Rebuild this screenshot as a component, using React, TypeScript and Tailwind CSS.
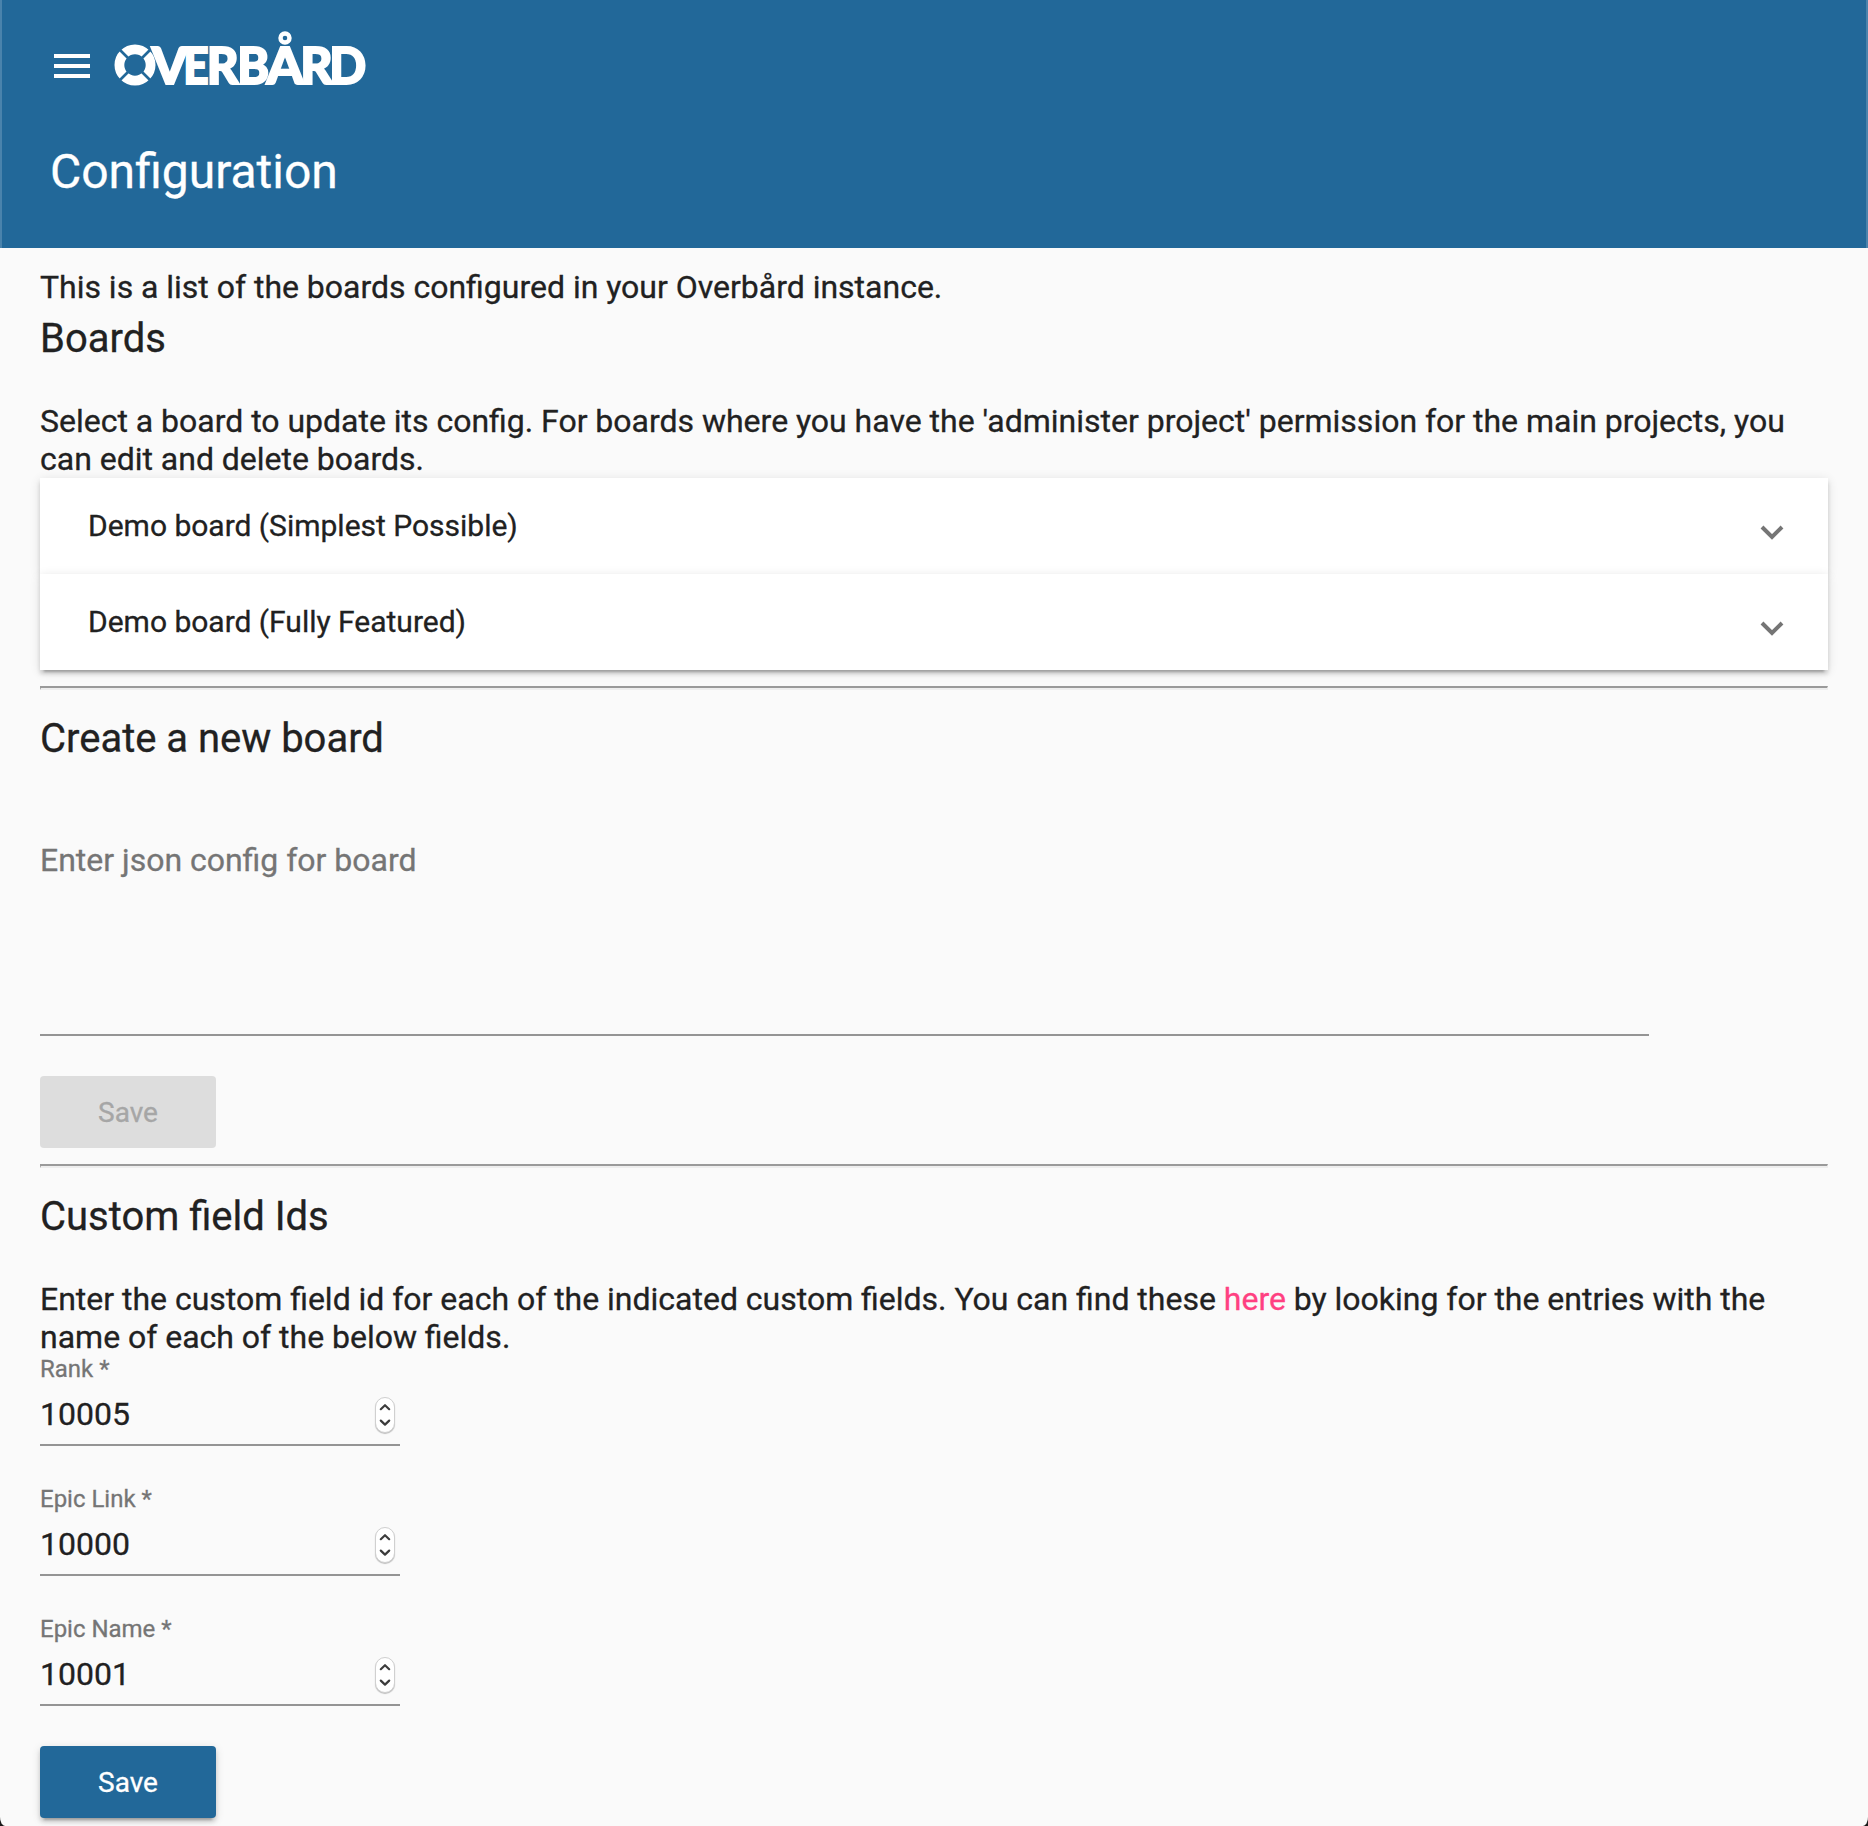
import React from "react";

function Logo() {
  return (
    <svg width="270" height="80" viewBox="112 20 270 80" fill="#fff" aria-label="Overbård" className="block">
      <circle cx="135" cy="65" r="15.6" fill="none" stroke="#fff" strokeWidth="9.8" />
      <g stroke="#226899" strokeWidth="2.7">
        <path d="M119 49l10 10M151 49l-10 10M119 81l10-10M151 81l-10-10" />
      </g>
      <text y="83.8" stroke="#fff" strokeWidth="2" className="font-[Lato] text-[52px] font-black">
        <tspan x="151.8" textLength="36" lengthAdjust="spacingAndGlyphs">V</tspan>
        <tspan x="183.3" textLength="25.4" lengthAdjust="spacingAndGlyphs">E</tspan>
        <tspan x="206.8" textLength="32" lengthAdjust="spacingAndGlyphs">R</tspan>
        <tspan x="237.2" textLength="32" lengthAdjust="spacingAndGlyphs">B</tspan>
        <tspan x="266.4" textLength="37" lengthAdjust="spacingAndGlyphs">A</tspan>
        <tspan x="300.2" textLength="32.5" lengthAdjust="spacingAndGlyphs">R</tspan>
        <tspan x="329.2" textLength="37" lengthAdjust="spacingAndGlyphs">D</tspan>
      </text>
      <circle cx="285" cy="38" r="4.5" fill="none" stroke="#fff" strokeWidth="4.4" />
    </svg>
  );
}

function Panel({ title }: { title: string }) {
  return (
    <div className="flex h-24 items-center justify-between bg-white pl-12 pr-[44px] shadow-[0_6px_2px_-4px_rgba(0,0,0,0.2),0_4px_4px_0_rgba(0,0,0,0.14),0_2px_10px_0_rgba(0,0,0,0.12)]">
      <span className="text-[30px] leading-[40px]">{title}</span>
      <svg width="24" height="16" viewBox="0 0 24 16" className="mt-[13px] block">
        <path d="M2 2L12 12L22 2" fill="none" stroke="#757575" strokeWidth="4" />
      </svg>
    </div>
  );
}

function Rule() {
  return (
    <div className="mt-4 mb-4 h-1 border-t-2 border-r border-b-2 border-l border-t-[#9a9a9a] border-r-[#eeeeee] border-b-[#eeeeee] border-l-[#9a9a9a]" />
  );
}

function Heading({ children }: { children: React.ReactNode }) {
  return <h2 className="mb-[31px] pt-px text-[40px] leading-[64px]">{children}</h2>;
}

function NumberField({ label, value }: { label: string; value: string }) {
  return (
    <div className="mb-10 h-[90px] w-[360px] border-b-2 border-[#949494]">
      <div className="h-[31px] text-[24px] leading-[26px] text-[#757575]">{label}</div>
      <div className="flex h-[57px] items-start justify-between pr-[5px]">
        <span className="mt-[8px] text-[32px] leading-[38px]">{value}</span>
        <span className="mt-[10px] flex h-[36px] w-5 items-center justify-center rounded-[10px] border border-[#d0d0d0] bg-white shadow-[0_1px_1px_rgba(0,0,0,0.25)]">
          <svg width="12" height="24" viewBox="0 0 12 24" fill="none" stroke="#3c3c3c" strokeWidth="2.2" strokeLinecap="round" strokeLinejoin="round">
            <path d="M1.8 6.2L6 2.2L10.2 6.2M1.8 17.6L6 21.6L10.2 17.6" />
          </svg>
        </span>
      </div>
    </div>
  );
}

export default function App() {
  return (
    <div className="bg-[#1a1a1a]">
      <div className="h-[1826px] w-[1868px] overflow-hidden bg-[#fafafa] font-[Roboto,sans-serif] text-[32px] leading-[38px] text-[#212121] [-webkit-text-stroke:0.3px] [border-radius:0_0_5px_5px/0_0_9px_9px] [word-spacing:-0.08px]">
        <header className="h-[248px] border-l-2 border-r-2 border-[#4a83ac] bg-[#226899] text-white">
          <div className="flex h-[128px] items-start pl-[52px] pt-[20px]">
            <div className="mt-[34px] flex w-9 flex-col gap-[6px]">
              <div className="h-1 bg-white" />
              <div className="h-1 bg-white" />
              <div className="h-1 bg-white" />
            </div>
            <div className="ml-[22px]">
              <Logo />
            </div>
          </div>
          <h1 className="pl-[48px] pt-[12px] text-[48px] leading-[64px]">Configuration</h1>
        </header>

        <main className="px-10 pt-5">
          <p>This is a list of the boards configured in your Overbård instance.</p>
          <Heading>Boards</Heading>
          <p>
            Select a board to update its config. For boards where you have the 'administer project' permission for the
            main projects, you can edit and delete boards.
          </p>
          <div>
            <Panel title="Demo board (Simplest Possible)" />
            <Panel title="Demo board (Fully Featured)" />
          </div>
          <Rule />
          <Heading>Create a new board</Heading>
          <div className="h-[234px] w-[1609px] border-b-2 border-[#949494] pt-[39px] text-[#757575]">
            Enter json config for board
          </div>
          <button className="mt-10 block h-[72px] w-[176px] rounded-[4px] bg-[#dddddd] pt-[2px] text-[28px] text-[#a6a6a6]">
            Save
          </button>
          <Rule />
          <Heading>Custom field Ids</Heading>
          <p>
            Enter the custom field id for each of the indicated custom fields. You can find these{" "}
            <a className="text-[#ff4081]">here</a> by looking for the entries with the name of each of the below fields.
          </p>
          <NumberField label="Rank *" value="10005" />
          <NumberField label="Epic Link *" value="10000" />
          <NumberField label="Epic Name *" value="10001" />
          <button className="block h-[72px] w-[176px] rounded-[4px] bg-[#226899] pt-[2px] text-[28px] text-white shadow-[0_6px_2px_-4px_rgba(0,0,0,0.2),0_4px_4px_0_rgba(0,0,0,0.14),0_2px_10px_0_rgba(0,0,0,0.12)]">
            Save
          </button>
        </main>
      </div>
    </div>
  );
}
